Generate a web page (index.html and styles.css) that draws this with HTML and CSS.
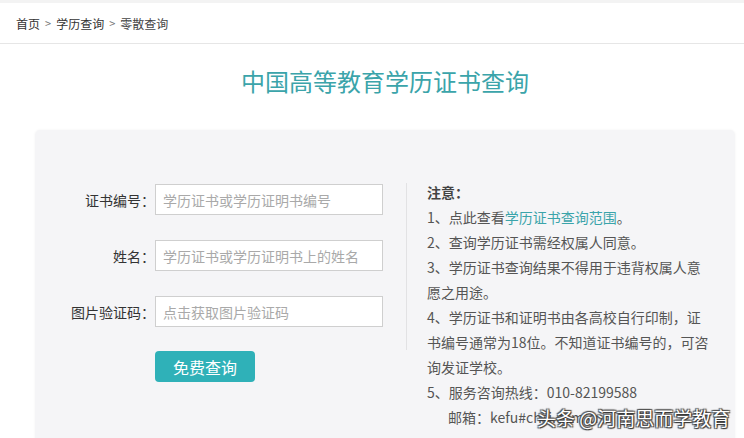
FILE: index.html
```html
<!DOCTYPE html>
<html lang="zh-CN">
<head>
<meta charset="utf-8">
<title>中国高等教育学历证书查询</title>
<link rel="stylesheet" href="styles.css">
</head>
<body>
<div class="crumb">
  <a class="crumb-link">首页</a><span class="sep">&gt;</span><a class="crumb-link">学历查询</a><span class="sep">&gt;</span><span class="crumb-cur">零散查询</span>
</div>
<h1 class="title">中国高等教育学历证书查询</h1>
<div class="panel">
  <form class="form">
    <label class="lbl">证书编号：</label>
    <input class="field" type="text" placeholder="学历证书或学历证明书编号">
    <label class="lbl">姓名：</label>
    <input class="field" type="text" placeholder="学历证书或学历证明书上的姓名">
    <label class="lbl">图片验证码：</label>
    <input class="field" type="text" placeholder="点击获取图片验证码">
    <span></span>
    <button class="btn" type="button">免费查询</button>
  </form>
  <div class="divider"></div>
  <div class="notes">
    <div class="notes-h">注意：</div>
    <div>1、点此查看<a class="link">学历证书查询范围</a>。</div>
    <div>2、查询学历证书需经权属人同意。</div>
    <div>3、学历证书查询结果不得用于违背权属人意<br>愿之用途。</div>
    <div>4、学历证书和证明书由各高校自行印制，证<br>书编号通常为18位。不知道证书编号的，可咨<br>询发证学校。</div>
    <div>5、服务咨询热线：010-82199588</div>
    <div class="mail">邮箱：kefu#chsi.com.cn</div>
  </div>
</div>
<div class="wm">头条 @河南思而学教育</div>
</body>
</html>
```
FILE: styles.css
```css
* { box-sizing: border-box; }
html, body { margin: 0; padding: 0; }
body {
  background: #fff;
  font-family: "Noto Sans CJK SC", "Microsoft YaHei", sans-serif;
  color: #333;
  width: 744px;
  height: 438px;
  overflow: hidden;
  position: relative;
}
.crumb {
  height: 44px;
  border-top: 3px solid #f3f3f3;
  border-bottom: 1px solid #e6e6e6;
  display: flex;
  align-items: center;
  padding-left: 16px;
  font-size: 12px;
  color: #333;
}
.crumb-link { color: #333; }
.crumb-cur { color: #444; }
.sep { color: #777; margin: 0 5px; font-size: 11px; }
.title {
  margin: 22px 0 0;
  height: 30px;
  line-height: 30px;
  text-align: center;
  font-size: 24px;
  font-weight: normal;
  color: #3ba4aa;
  padding-left: 26px;
}
.panel {
  margin: 34px 0 0 35px;
  width: 700px;
  height: 320px;
  background: #f5f5f7;
  border-radius: 5px;
  box-shadow: 0 0 3px rgba(0,0,0,0.05);
  display: flex;
  align-items: flex-start;
  padding-top: 54px;
}
.form {
  display: grid;
  grid-template-columns: 120px 228px;
  row-gap: 25px;
  align-items: center;
  margin: 0;
}
.lbl {
  text-align: right;
  font-size: 14px;
  color: #333;
  white-space: nowrap;
}
.field {
  height: 31px;
  border: 1px solid #cfcfcf;
  background: #fff;
  padding: 0 7px;
  font-size: 14px;
  font-family: inherit;
  color: #333;
  outline: none;
}
.field::placeholder { color: #a9a9a9; }
.btn {
  width: 100px;
  height: 31px;
  margin-top: -1px;
  border: none;
  border-radius: 4px;
  background: #2fb1b8;
  color: #fff;
  font-size: 16px;
  font-family: inherit;
  padding: 0;
}
.divider {
  width: 1px;
  height: 167px;
  background: #e2e2e4;
  margin: -1px 0 0 23px;
}
.notes {
  margin: -4px 0 0 20px;
  font-size: 14px;
  line-height: 25px;
  color: #555;
  white-space: nowrap;
}
.notes-h { font-weight: bold; color: #444; }
.link { color: #3ba4aa; }
.mail { padding-left: 21px; }
.wm {
  position: absolute;
  left: 537px;
  top: 405px;
  font-size: 19px;
  line-height: 26px;
  color: #fff;
  text-shadow: 0 0 1px #333, 1px 1px 1px #333, -1px -1px 1px #555, 1px -1px 1px #555, -1px 1px 1px #555;
  white-space: nowrap;
}
```
